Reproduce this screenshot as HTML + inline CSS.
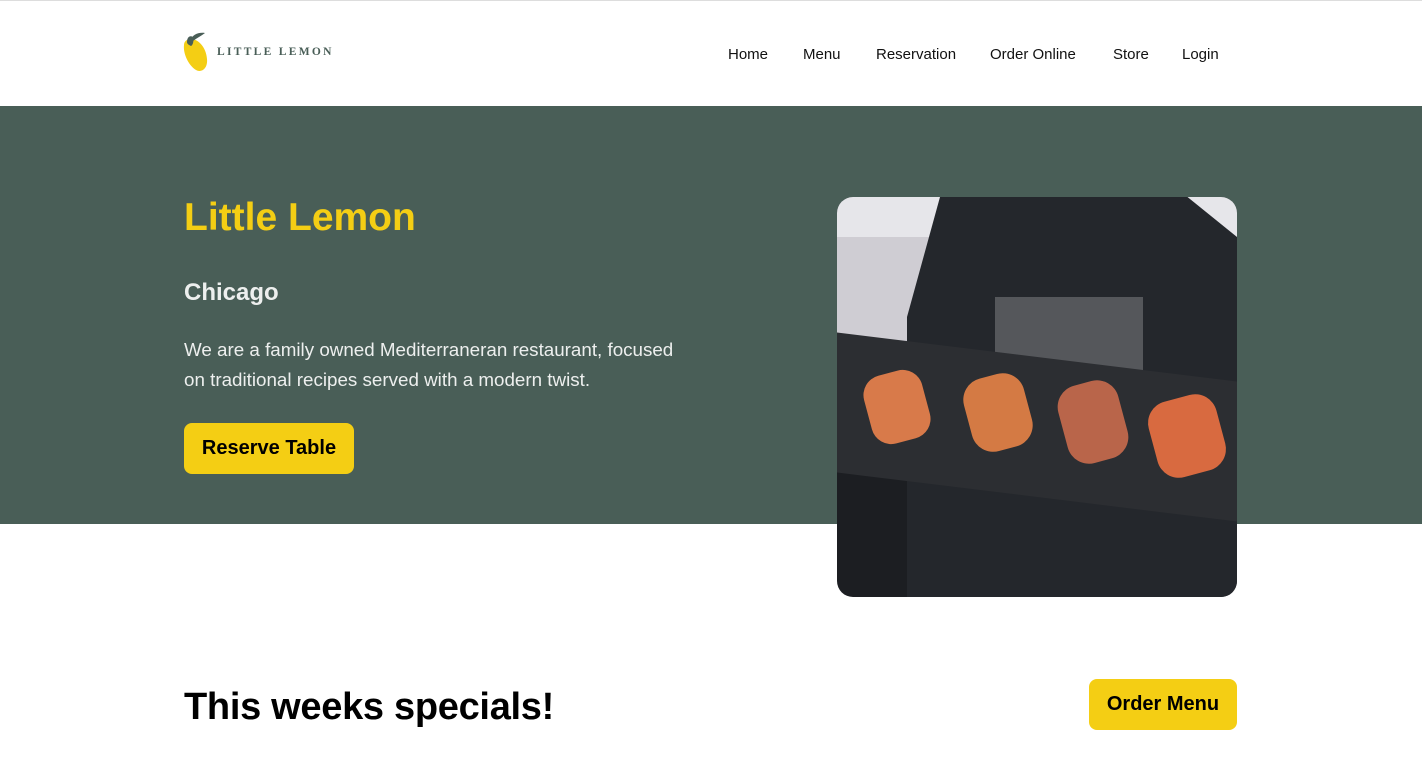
<!DOCTYPE html>
<html><head><style>
*{margin:0;padding:0;box-sizing:border-box}
body{width:1422px;height:774px;overflow:hidden;background:#fff;font-family:"Liberation Sans",sans-serif;position:relative}
.nav a{position:absolute;top:46px;font-size:15px;color:#111;text-decoration:none}
.hero{position:absolute;left:0;top:106px;width:1422px;height:418px;background:#495E57}
.btn{position:absolute;background:#F4CE14;border-radius:8px;font-weight:bold;color:#000;display:flex;align-items:center;justify-content:center}
</style></head><body>
<div style="position:absolute;left:0;top:0;width:1422px;height:1px;background:#ddd"></div>
<svg style="position:absolute;left:183px;top:31px" width="28" height="42" viewBox="0 0 28 42">
<path d="M4 9 C12 5 23 14 24 28 C25 38 18 42 13 39 C5 34 0 22 1 14 C1 12 2 10 4 9Z" fill="#F4CE14"/>
<path d="M8 9 C9 4 15 1 22 2 C18 5 14 7 10 10Z" fill="#495E57"/>
<path d="M4 11 C4 6 7 4 10 6 C11 10 10 14 8 15 C6 14 4 13 4 11Z" fill="#495E57"/>
</svg>
<div style="position:absolute;left:217px;top:46px;font-family:'Liberation Serif',serif;font-weight:bold;font-size:11.5px;letter-spacing:2.3px;color:#495E57">LITTLE LEMON</div>
<div class="nav"><a style="left:728px">Home</a><a style="left:803px">Menu</a><a style="left:876px">Reservation</a><a style="left:990px">Order Online</a><a style="left:1113px">Store</a><a style="left:1182px">Login</a></div>
<div class="hero"></div>
<div style="position:absolute;left:184px;top:196px;font-size:39px;font-weight:bold;color:#F4CE14">Little Lemon</div>
<div style="position:absolute;left:184px;top:279px;font-size:24px;font-weight:bold;color:#EDEFEE">Chicago</div>
<div style="position:absolute;left:184px;top:335px;width:505px;font-size:18.8px;line-height:30px;color:#EDEFEE">We are a family owned Mediterraneran restaurant, focused on traditional recipes served with a modern twist.</div>
<div class="btn" style="left:184px;top:423px;width:170px;height:51px;font-size:20px">Reserve Table</div>
<div style="position:absolute;left:837px;top:197px;width:400px;height:400px;border-radius:16px;overflow:hidden;background:#1c1e22">
<div style="position:absolute;left:0;top:0;width:400px;height:40px;background:#e6e6ea"></div>
<div style="position:absolute;left:0;top:40px;width:110px;height:140px;background:#cfcdd3"></div>
<div style="position:absolute;left:70px;top:0;width:330px;height:400px;background:#24272c;clip-path:polygon(10% 0,85% 0,100% 10%,100% 100%,0 100%,0 30%)"></div>
<div style="position:absolute;left:158px;top:100px;width:148px;height:75px;background:#55575b"></div>
<div style="position:absolute;left:0;top:160px;width:400px;height:140px;background:#2c2e32;transform:skewY(7deg)"></div>
<div style="position:absolute;left:30px;top:175px;width:60px;height:70px;border-radius:20px;background:#d87a4a;transform:rotate(-15deg)"></div>
<div style="position:absolute;left:130px;top:178px;width:62px;height:75px;border-radius:22px;background:#d47a44;transform:rotate(-15deg)"></div>
<div style="position:absolute;left:225px;top:185px;width:62px;height:80px;border-radius:22px;background:#b9654a;transform:rotate(-15deg)"></div>
<div style="position:absolute;left:315px;top:200px;width:70px;height:78px;border-radius:22px;background:#d86a40;transform:rotate(-15deg)"></div>
</div>
<div style="position:absolute;left:184px;top:686px;font-size:38px;font-weight:bold;color:#000;letter-spacing:-0.3px">This weeks specials!</div>
<div class="btn" style="left:1089px;top:679px;width:148px;height:51px;font-size:20px">Order Menu</div>
</body></html>
